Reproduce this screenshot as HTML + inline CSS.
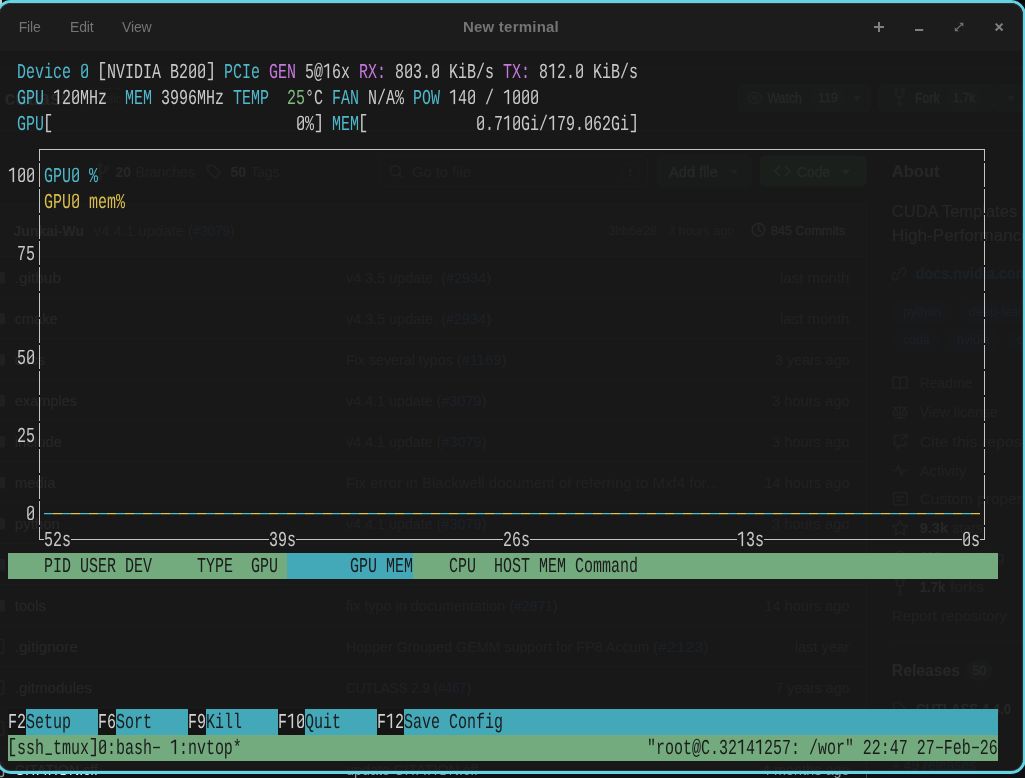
<!DOCTYPE html>
<html><head><meta charset="utf-8"><title>New terminal</title>
<style>
html,body{margin:0;padding:0}
body{width:1025px;height:778px;overflow:hidden;position:relative;background:#0d1117;font-family:"Liberation Sans",sans-serif}
#win{position:absolute;left:-4px;top:0;width:1030px;height:774px;box-sizing:border-box;border:3px solid #62d4e5;border-radius:15px;background:rgba(25,25,25,0.947);overflow:hidden}
#win:after{content:"";position:absolute;left:0;top:0;right:0;bottom:0;border-radius:12px;box-shadow:inset 0 0 0 1px rgba(120,95,90,0.3);pointer-events:none}
#inner{position:absolute;left:1px;top:-3px;width:1025px;height:778px;will-change:transform}
#tb{position:absolute;left:-1px;top:0;width:1027px;height:51px;background:#1c1c1c}
.m{position:absolute;top:17px;font-size:14px;line-height:20px;color:#747474;white-space:pre;letter-spacing:-0.15px}
#title{position:absolute;top:17px;left:411px;width:200px;text-align:center;font-size:15px;line-height:20px;font-weight:bold;color:#747474;white-space:pre;letter-spacing:0.22px}
.t{position:absolute;height:26px;line-height:26px;font-family:"Liberation Mono",monospace;font-size:21.2px;white-space:pre;transform-origin:0 0;transform:scaleX(0.70743);letter-spacing:0;text-rendering:geometricPrecision}
.r{position:absolute}
svg{position:absolute;overflow:visible}
.g{position:absolute}
</style></head>
<body>
<svg id="page" width="1025" height="778" viewBox="0 0 1025 778" font-family="Liberation Sans, sans-serif" style="position:absolute;left:0;top:0;will-change:transform">
<rect x="0" y="0" width="2" height="5" rx="0" fill="#c9c9c9"/>
<rect x="2" y="0" width="4" height="3" rx="0" fill="#050505"/>
<rect x="1019" y="0" width="6" height="3" rx="0" fill="#050608"/>
<path d="M0 67.5L1025 67.5" stroke="#3d444d" stroke-width="1" fill="none"/>
<path d="M0 130.5L1025 130.5" stroke="#3d444d" stroke-width="1" fill="none"/>
<text x="4.4" y="104.7" font-size="20" font-weight="bold" fill="#f0f6fc" textLength="67.3" lengthAdjust="spacingAndGlyphs">cutlass</text>
<rect x="82.5" y="88.5" width="46" height="20" rx="10" fill="none" stroke="#3d444d" stroke-width="1"/>
<text x="90" y="102.8" font-size="12" font-weight="normal" fill="#9198a1" textLength="31.5" lengthAdjust="spacingAndGlyphs">Public</text>
<rect x="738.5" y="84.5" width="132" height="27" rx="6" fill="#212830" stroke="#3d444d" stroke-width="1"/>
<path d="M748 97.8c2-4 4.5-5.6 7-5.6s5 1.6 7 5.6c-2 4-4.5 5.6-7 5.6s-5-1.6-7-5.6z M755 95.8a2 2 0 1 0 .01 0z" stroke="#9198a1" stroke-width="1.5" fill="none" stroke-linecap="round" stroke-linejoin="round"/>
<text x="767.4" y="102.8" font-size="14" font-weight="normal" fill="#f0f6fc" stroke="#f0f6fc" stroke-width="0.3" textLength="34.6" lengthAdjust="spacingAndGlyphs">Watch</text>
<rect x="810" y="88" width="35" height="20" rx="10" fill="#2f3742" stroke="none" stroke-width="1"/>
<text x="818" y="102.1" font-size="12" font-weight="normal" fill="#f0f6fc" stroke="#f0f6fc" stroke-width="0.3" textLength="20.0" lengthAdjust="spacingAndGlyphs">119</text>
<path d="M853.5 96.5h7l-3.5 4z" stroke="#9198a1" stroke-width="0.5" fill="#9198a1" stroke-linecap="round" stroke-linejoin="round"/>
<rect x="878.5" y="84.5" width="116" height="27" rx="6" fill="#212830" stroke="#3d444d" stroke-width="1"/>
<rect x="994.5" y="84.5" width="40" height="27" rx="6" fill="#212830" stroke="#3d444d" stroke-width="1"/>
<path d="M896 91.5v3.2c0 1.6 1 2.3 2.3 2.3h2.4c1.300 0 2.300-.7 2.300-2.300v-3.200M899.500 97v6" stroke="#9198a1" stroke-width="1.4" fill="none" stroke-linecap="round" stroke-linejoin="round"/>
<circle cx="896" cy="90.3" r="1.7" fill="none" stroke="#9198a1" stroke-width="1.3"/>
<circle cx="903" cy="90.3" r="1.7" fill="none" stroke="#9198a1" stroke-width="1.3"/>
<circle cx="899.5" cy="104.3" r="1.7" fill="none" stroke="#9198a1" stroke-width="1.3"/>
<text x="915" y="102.8" font-size="14" font-weight="normal" fill="#f0f6fc" stroke="#f0f6fc" stroke-width="0.3" textLength="24.5" lengthAdjust="spacingAndGlyphs">Fork</text>
<rect x="946" y="88" width="35" height="20" rx="10" fill="#2f3742" stroke="none" stroke-width="1"/>
<text x="953" y="102.1" font-size="12" font-weight="normal" fill="#f0f6fc" stroke="#f0f6fc" stroke-width="0.3" textLength="22.0" lengthAdjust="spacingAndGlyphs">1.7k</text>
<path d="M1007.5 96.5h7l-3.5 4z" stroke="#9198a1" stroke-width="0.5" fill="#9198a1" stroke-linecap="round" stroke-linejoin="round"/>
<path d="M100 166.5v8.500M100 175c0-3 6.500-2 6.500-5.500" stroke="#9198a1" stroke-width="1.4" fill="none" stroke-linecap="round" stroke-linejoin="round"/>
<circle cx="100" cy="165.3" r="1.6" fill="none" stroke="#9198a1" stroke-width="1.3"/>
<circle cx="100" cy="177.8" r="1.6" fill="none" stroke="#9198a1" stroke-width="1.3"/>
<circle cx="106.5" cy="168" r="1.6" fill="none" stroke="#9198a1" stroke-width="1.3"/>
<text x="115.5" y="177.0" font-size="14" font-weight="bold" fill="#f0f6fc" textLength="15.5" lengthAdjust="spacingAndGlyphs">20</text>
<text x="135.5" y="177.0" font-size="14" font-weight="normal" fill="#9198a1" textLength="59.5" lengthAdjust="spacingAndGlyphs">Branches</text>
<path d="M208 165.5h5.500l7 7-5.500 5.500-7-7z" stroke="#9198a1" stroke-width="1.4" fill="none" stroke-linecap="round" stroke-linejoin="round"/>
<text x="230.5" y="177.0" font-size="14" font-weight="bold" fill="#f0f6fc" textLength="15.5" lengthAdjust="spacingAndGlyphs">50</text>
<text x="250.5" y="177.0" font-size="14" font-weight="normal" fill="#9198a1" textLength="29.0" lengthAdjust="spacingAndGlyphs">Tags</text>
<rect x="379.5" y="156.5" width="268" height="30" rx="6" fill="#0d1117" stroke="#3d444d" stroke-width="1"/>
<circle cx="395.300" cy="170.800" r="5" fill="none" stroke="#9198a1" stroke-width="1.5"/>
<path d="M399 174.500l3.500 3.500" stroke="#9198a1" stroke-width="1.5" fill="none" stroke-linecap="round" stroke-linejoin="round"/>
<text x="412" y="176.5" font-size="14" font-weight="normal" fill="#9198a1" textLength="59.0" lengthAdjust="spacingAndGlyphs">Go to file</text>
<rect x="622.5" y="164.5" width="16" height="16" rx="4" fill="none" stroke="#3d444d" stroke-width="1"/>
<text x="628.5" y="175.9" font-size="11" font-weight="normal" fill="#9198a1" textLength="4.0" lengthAdjust="spacingAndGlyphs">t</text>
<rect x="657.5" y="155.5" width="94" height="31" rx="6" fill="#212830" stroke="#3d444d" stroke-width="1"/>
<text x="669" y="176.5" font-size="14" font-weight="normal" fill="#f0f6fc" stroke="#f0f6fc" stroke-width="0.3" textLength="49.0" lengthAdjust="spacingAndGlyphs">Add file</text>
<path d="M731 170h7l-3.500 4z" stroke="#9198a1" stroke-width="0.5" fill="#9198a1" stroke-linecap="round" stroke-linejoin="round"/>
<rect x="760" y="155.5" width="107" height="31" rx="6" fill="#238636" stroke="none" stroke-width="1"/>
<path d="M779.500 166.500l-4.500 4.500 4.500 4.500M785.500 166.500l4.500 4.500-4.500 4.500" stroke="#ffffff" stroke-width="1.6" fill="none" stroke-linecap="round" stroke-linejoin="round"/>
<text x="797" y="176.5" font-size="14" font-weight="normal" fill="#ffffff" stroke="#ffffff" stroke-width="0.3" textLength="33.0" lengthAdjust="spacingAndGlyphs">Code</text>
<path d="M842.500 170h7l-3.500 4z" stroke="#ffffff" stroke-width="0.5" fill="#ffffff" stroke-linecap="round" stroke-linejoin="round"/>
<rect x="-10.5" y="203.5" width="877" height="620" rx="6" fill="none" stroke="#3d444d" stroke-width="1"/>
<rect x="-10" y="204" width="876" height="52" rx="6" fill="#151b23" stroke="none" stroke-width="1"/>
<path d="M-10 256.5L866.5 256.5" stroke="#3d444d" stroke-width="1" fill="none"/>
<path d="M-10 297.5L866.5 297.5" stroke="#3d444d" stroke-width="1" fill="none"/>
<path d="M-10 338.5L866.5 338.5" stroke="#3d444d" stroke-width="1" fill="none"/>
<path d="M-10 379.5L866.5 379.5" stroke="#3d444d" stroke-width="1" fill="none"/>
<path d="M-10 420.5L866.5 420.5" stroke="#3d444d" stroke-width="1" fill="none"/>
<path d="M-10 461.5L866.5 461.5" stroke="#3d444d" stroke-width="1" fill="none"/>
<path d="M-10 502.5L866.5 502.5" stroke="#3d444d" stroke-width="1" fill="none"/>
<path d="M-10 543.5L866.5 543.5" stroke="#3d444d" stroke-width="1" fill="none"/>
<path d="M-10 584.5L866.5 584.5" stroke="#3d444d" stroke-width="1" fill="none"/>
<path d="M-10 625.5L866.5 625.5" stroke="#3d444d" stroke-width="1" fill="none"/>
<path d="M-10 666.5L866.5 666.5" stroke="#3d444d" stroke-width="1" fill="none"/>
<path d="M-10 707.5L866.5 707.5" stroke="#3d444d" stroke-width="1" fill="none"/>
<path d="M-10 748.5L866.5 748.5" stroke="#3d444d" stroke-width="1" fill="none"/>
<path d="M-10 789.5L866.5 789.5" stroke="#3d444d" stroke-width="1" fill="none"/>
<text x="13.6" y="235.5" font-size="14" font-weight="bold" fill="#f0f6fc" textLength="70.4" lengthAdjust="spacingAndGlyphs">Junkai-Wu</text>
<text x="93.7" y="235.5" font-size="14" font-weight="normal" fill="#9198a1" textLength="99.3" lengthAdjust="spacingAndGlyphs">v4.4.1 update (</text>
<text x="193" y="235.5" font-size="14" font-weight="normal" fill="#4493f8" textLength="37.0" lengthAdjust="spacingAndGlyphs">#3079</text>
<text x="230" y="235.5" font-size="14" font-weight="normal" fill="#9198a1" textLength="4.5" lengthAdjust="spacingAndGlyphs">)</text>
<text x="608.5" y="235.0" font-size="12.5" font-weight="normal" fill="#9198a1" textLength="125.5" lengthAdjust="spacingAndGlyphs">3bb6e28 · 3 hours ago</text>
<circle cx="758.500" cy="229.800" r="6.300" fill="none" stroke="#f0f6fc" stroke-width="1.4"/>
<path d="M758.500 226v4.200l2.800 1.600" stroke="#f0f6fc" stroke-width="1.4" fill="none" stroke-linecap="round" stroke-linejoin="round"/>
<text x="771" y="234.8" font-size="13.5" font-weight="normal" fill="#f0f6fc" stroke="#f0f6fc" stroke-width="0.3" textLength="74.0" lengthAdjust="spacingAndGlyphs">845 Commits</text>
<rect x="-8" y="272.0" width="13" height="11.5" rx="2" fill="#9198a1" stroke="none" stroke-width="1"/>
<text x="14.8" y="282.7" font-size="14.5" font-weight="normal" fill="#f0f6fc" textLength="46.2" lengthAdjust="spacingAndGlyphs">.github</text>
<text x="346" y="282.7" font-size="14.5" font-weight="normal" fill="#9198a1" textLength="100.0" lengthAdjust="spacingAndGlyphs">v4.3.5 update. (</text>
<text x="446" y="282.7" font-size="14.5" font-weight="normal" fill="#4493f8" textLength="40.0" lengthAdjust="spacingAndGlyphs">#2934</text>
<text x="486" y="282.7" font-size="14.5" font-weight="normal" fill="#9198a1" textLength="5.5" lengthAdjust="spacingAndGlyphs">)</text>
<text x="780" y="282.7" font-size="14.5" font-weight="normal" fill="#9198a1" textLength="69.5" lengthAdjust="spacingAndGlyphs">last month</text>
<rect x="-8" y="313.0" width="13" height="11.5" rx="2" fill="#9198a1" stroke="none" stroke-width="1"/>
<text x="14.8" y="323.7" font-size="14.5" font-weight="normal" fill="#f0f6fc" textLength="42.7" lengthAdjust="spacingAndGlyphs">cmake</text>
<text x="346" y="323.7" font-size="14.5" font-weight="normal" fill="#9198a1" textLength="100.0" lengthAdjust="spacingAndGlyphs">v4.3.5 update. (</text>
<text x="446" y="323.7" font-size="14.5" font-weight="normal" fill="#4493f8" textLength="40.0" lengthAdjust="spacingAndGlyphs">#2934</text>
<text x="486" y="323.7" font-size="14.5" font-weight="normal" fill="#9198a1" textLength="5.5" lengthAdjust="spacingAndGlyphs">)</text>
<text x="780" y="323.7" font-size="14.5" font-weight="normal" fill="#9198a1" textLength="69.5" lengthAdjust="spacingAndGlyphs">last month</text>
<rect x="-8" y="354.0" width="13" height="11.5" rx="2" fill="#9198a1" stroke="none" stroke-width="1"/>
<text x="14.8" y="364.7" font-size="14.5" font-weight="normal" fill="#f0f6fc" textLength="30.2" lengthAdjust="spacingAndGlyphs">docs</text>
<text x="346" y="364.7" font-size="14.5" font-weight="normal" fill="#9198a1" textLength="115.5" lengthAdjust="spacingAndGlyphs">Fix several typos (</text>
<text x="461.5" y="364.7" font-size="14.5" font-weight="normal" fill="#4493f8" textLength="40.0" lengthAdjust="spacingAndGlyphs">#1169</text>
<text x="501.5" y="364.7" font-size="14.5" font-weight="normal" fill="#9198a1" textLength="5.0" lengthAdjust="spacingAndGlyphs">)</text>
<text x="775" y="364.7" font-size="14.5" font-weight="normal" fill="#9198a1" textLength="74.5" lengthAdjust="spacingAndGlyphs">3 years ago</text>
<rect x="-8" y="395.0" width="13" height="11.5" rx="2" fill="#9198a1" stroke="none" stroke-width="1"/>
<text x="14.8" y="405.7" font-size="14.5" font-weight="normal" fill="#f0f6fc" textLength="62.2" lengthAdjust="spacingAndGlyphs">examples</text>
<text x="346" y="405.7" font-size="14.5" font-weight="normal" fill="#9198a1" textLength="95.5" lengthAdjust="spacingAndGlyphs">v4.4.1 update (</text>
<text x="441.5" y="405.7" font-size="14.5" font-weight="normal" fill="#4493f8" textLength="40.0" lengthAdjust="spacingAndGlyphs">#3079</text>
<text x="481.5" y="405.7" font-size="14.5" font-weight="normal" fill="#9198a1" textLength="5.0" lengthAdjust="spacingAndGlyphs">)</text>
<text x="772" y="405.7" font-size="14.5" font-weight="normal" fill="#9198a1" textLength="77.5" lengthAdjust="spacingAndGlyphs">3 hours ago</text>
<rect x="-8" y="436.0" width="13" height="11.5" rx="2" fill="#9198a1" stroke="none" stroke-width="1"/>
<text x="14.8" y="446.7" font-size="14.5" font-weight="normal" fill="#f0f6fc" textLength="47.2" lengthAdjust="spacingAndGlyphs">include</text>
<text x="346" y="446.7" font-size="14.5" font-weight="normal" fill="#9198a1" textLength="95.5" lengthAdjust="spacingAndGlyphs">v4.4.1 update (</text>
<text x="441.5" y="446.7" font-size="14.5" font-weight="normal" fill="#4493f8" textLength="40.0" lengthAdjust="spacingAndGlyphs">#3079</text>
<text x="481.5" y="446.7" font-size="14.5" font-weight="normal" fill="#9198a1" textLength="5.0" lengthAdjust="spacingAndGlyphs">)</text>
<text x="772" y="446.7" font-size="14.5" font-weight="normal" fill="#9198a1" textLength="77.5" lengthAdjust="spacingAndGlyphs">3 hours ago</text>
<rect x="-8" y="477.0" width="13" height="11.5" rx="2" fill="#9198a1" stroke="none" stroke-width="1"/>
<text x="14.8" y="487.7" font-size="14.5" font-weight="normal" fill="#f0f6fc" textLength="40.7" lengthAdjust="spacingAndGlyphs">media</text>
<text x="346" y="487.7" font-size="14.5" font-weight="normal" fill="#9198a1" textLength="372.5" lengthAdjust="spacingAndGlyphs">Fix error in Blackwell document of referring to Mxf4 for...</text>
<text x="764.5" y="487.7" font-size="14.5" font-weight="normal" fill="#9198a1" textLength="85.0" lengthAdjust="spacingAndGlyphs">14 hours ago</text>
<rect x="-8" y="518.0" width="13" height="11.5" rx="2" fill="#9198a1" stroke="none" stroke-width="1"/>
<text x="14.8" y="528.7" font-size="14.5" font-weight="normal" fill="#f0f6fc" textLength="45.2" lengthAdjust="spacingAndGlyphs">python</text>
<text x="346" y="528.7" font-size="14.5" font-weight="normal" fill="#9198a1" textLength="95.5" lengthAdjust="spacingAndGlyphs">v4.4.1 update (</text>
<text x="441.5" y="528.7" font-size="14.5" font-weight="normal" fill="#4493f8" textLength="40.0" lengthAdjust="spacingAndGlyphs">#3079</text>
<text x="481.5" y="528.7" font-size="14.5" font-weight="normal" fill="#9198a1" textLength="5.0" lengthAdjust="spacingAndGlyphs">)</text>
<text x="772" y="528.7" font-size="14.5" font-weight="normal" fill="#9198a1" textLength="77.5" lengthAdjust="spacingAndGlyphs">3 hours ago</text>
<rect x="-8" y="559.0" width="13" height="11.5" rx="2" fill="#9198a1" stroke="none" stroke-width="1"/>
<text x="14.8" y="569.7" font-size="14.5" font-weight="normal" fill="#f0f6fc" textLength="24.2" lengthAdjust="spacingAndGlyphs">test</text>
<text x="346" y="569.7" font-size="14.5" font-weight="normal" fill="#9198a1" textLength="95.5" lengthAdjust="spacingAndGlyphs">v4.4.1 update (</text>
<text x="441.5" y="569.7" font-size="14.5" font-weight="normal" fill="#4493f8" textLength="40.0" lengthAdjust="spacingAndGlyphs">#3079</text>
<text x="481.5" y="569.7" font-size="14.5" font-weight="normal" fill="#9198a1" textLength="5.0" lengthAdjust="spacingAndGlyphs">)</text>
<text x="772" y="569.7" font-size="14.5" font-weight="normal" fill="#9198a1" textLength="77.5" lengthAdjust="spacingAndGlyphs">3 hours ago</text>
<rect x="-8" y="600.0" width="13" height="11.5" rx="2" fill="#9198a1" stroke="none" stroke-width="1"/>
<text x="14.8" y="610.7" font-size="14.5" font-weight="normal" fill="#f0f6fc" textLength="31.2" lengthAdjust="spacingAndGlyphs">tools</text>
<text x="346" y="610.7" font-size="14.5" font-weight="normal" fill="#9198a1" textLength="168.0" lengthAdjust="spacingAndGlyphs">fix typo in documentation (</text>
<text x="514" y="610.7" font-size="14.5" font-weight="normal" fill="#4493f8" textLength="39.0" lengthAdjust="spacingAndGlyphs">#2871</text>
<text x="553" y="610.7" font-size="14.5" font-weight="normal" fill="#9198a1" textLength="5.0" lengthAdjust="spacingAndGlyphs">)</text>
<text x="764.5" y="610.7" font-size="14.5" font-weight="normal" fill="#9198a1" textLength="85.0" lengthAdjust="spacingAndGlyphs">14 hours ago</text>
<rect x="-7.5" y="639.5" width="11" height="14" rx="2" fill="none" stroke="#9198a1" stroke-width="1.4"/>
<text x="14.8" y="651.7" font-size="14.5" font-weight="normal" fill="#f0f6fc" textLength="63.2" lengthAdjust="spacingAndGlyphs">.gitignore</text>
<text x="346" y="651.7" font-size="14.5" font-weight="normal" fill="#9198a1" textLength="312.0" lengthAdjust="spacingAndGlyphs">Hopper Grouped GEMM support for FP8 Accum (</text>
<text x="658" y="651.7" font-size="14.5" font-weight="normal" fill="#4493f8" textLength="45.5" lengthAdjust="spacingAndGlyphs">#2123</text>
<text x="703.5" y="651.7" font-size="14.5" font-weight="normal" fill="#9198a1" textLength="5.0" lengthAdjust="spacingAndGlyphs">)</text>
<text x="795" y="651.7" font-size="14.5" font-weight="normal" fill="#9198a1" textLength="54.5" lengthAdjust="spacingAndGlyphs">last year</text>
<rect x="-7.5" y="680.5" width="11" height="14" rx="2" fill="none" stroke="#9198a1" stroke-width="1.4"/>
<text x="14.8" y="692.7" font-size="14.5" font-weight="normal" fill="#f0f6fc" textLength="77.2" lengthAdjust="spacingAndGlyphs">.gitmodules</text>
<text x="346" y="692.7" font-size="14.5" font-weight="normal" fill="#9198a1" textLength="92.0" lengthAdjust="spacingAndGlyphs">CUTLASS 2.9 (</text>
<text x="438" y="692.7" font-size="14.5" font-weight="normal" fill="#4493f8" textLength="28.5" lengthAdjust="spacingAndGlyphs">#467</text>
<text x="466.5" y="692.7" font-size="14.5" font-weight="normal" fill="#9198a1" textLength="5.0" lengthAdjust="spacingAndGlyphs">)</text>
<text x="775.5" y="692.7" font-size="14.5" font-weight="normal" fill="#9198a1" textLength="74.0" lengthAdjust="spacingAndGlyphs">7 years ago</text>
<rect x="-7.5" y="721.5" width="11" height="14" rx="2" fill="none" stroke="#9198a1" stroke-width="1.4"/>
<text x="14.8" y="733.7" font-size="14.5" font-weight="normal" fill="#f0f6fc" textLength="84.2" lengthAdjust="spacingAndGlyphs">.gitattributes</text>
<text x="346" y="733.7" font-size="14.5" font-weight="normal" fill="#9198a1" textLength="98.0" lengthAdjust="spacingAndGlyphs">v4.2.0 release (</text>
<text x="444" y="733.7" font-size="14.5" font-weight="normal" fill="#4493f8" textLength="40.0" lengthAdjust="spacingAndGlyphs">#2617</text>
<text x="484" y="733.7" font-size="14.5" font-weight="normal" fill="#9198a1" textLength="5.0" lengthAdjust="spacingAndGlyphs">)</text>
<text x="762" y="733.7" font-size="14.5" font-weight="normal" fill="#9198a1" textLength="87.5" lengthAdjust="spacingAndGlyphs">6 months ago</text>
<rect x="-7.5" y="762.5" width="11" height="14" rx="2" fill="none" stroke="#9198a1" stroke-width="1.4"/>
<text x="14.8" y="774.7" font-size="14.5" font-weight="normal" fill="#f0f6fc" textLength="83.2" lengthAdjust="spacingAndGlyphs">CITATION.cff</text>
<text x="346" y="774.7" font-size="14.5" font-weight="normal" fill="#9198a1" textLength="132.0" lengthAdjust="spacingAndGlyphs">update CITATION.cff</text>
<text x="762" y="774.7" font-size="14.5" font-weight="normal" fill="#9198a1" textLength="87.5" lengthAdjust="spacingAndGlyphs">4 months ago</text>
<text x="891.8" y="176.9" font-size="16" font-weight="bold" fill="#f0f6fc" textLength="47.7" lengthAdjust="spacingAndGlyphs">About</text>
<text x="891.8" y="217.4" font-size="16.5" font-weight="normal" fill="#f0f6fc" textLength="282.2" lengthAdjust="spacingAndGlyphs">CUDA Templates and Python DSLs for</text>
<text x="891.8" y="240.9" font-size="16.5" font-weight="normal" fill="#f0f6fc" textLength="254.2" lengthAdjust="spacingAndGlyphs">High-Performance Linear Algebra</text>
<path d="M899.500 270.500l1.500-1.500a3 3 0 0 1 4.300 4.300l-2.500 2.500M898.500 277.500l-1.500 1.500a3 3 0 0 1-4.300-4.300l2.500-2.500M896.500 276l4-4" stroke="#9198a1" stroke-width="1.5" fill="none" stroke-linecap="round" stroke-linejoin="round"/>
<text x="915.7" y="279.2" font-size="16" font-weight="bold" fill="#4493f8" textLength="242.3" lengthAdjust="spacingAndGlyphs">docs.nvidia.com/cutlass/index.html</text>
<rect x="893" y="300.6" width="58.5" height="22" rx="11" fill="#0f1726" stroke="none" stroke-width="1"/>
<text x="903" y="315.9" font-size="12" font-weight="normal" fill="#4493f8" textLength="38.5" lengthAdjust="spacingAndGlyphs">python</text>
<rect x="959" y="300.6" width="97" height="22" rx="11" fill="#0f1726" stroke="none" stroke-width="1"/>
<text x="969" y="315.9" font-size="12" font-weight="normal" fill="#4493f8" textLength="77.0" lengthAdjust="spacingAndGlyphs">deep-learning</text>
<rect x="893" y="329" width="46.5" height="22" rx="11" fill="#0f1726" stroke="none" stroke-width="1"/>
<text x="903" y="344.3" font-size="12" font-weight="normal" fill="#4493f8" textLength="26.5" lengthAdjust="spacingAndGlyphs">cuda</text>
<rect x="947" y="329" width="52.5" height="22" rx="11" fill="#0f1726" stroke="none" stroke-width="1"/>
<text x="957" y="344.3" font-size="12" font-weight="normal" fill="#4493f8" textLength="32.5" lengthAdjust="spacingAndGlyphs">nvidia</text>
<rect x="1007" y="329" width="40" height="22" rx="11" fill="#0f1726" stroke="none" stroke-width="1"/>
<text x="1017" y="344.3" font-size="12" font-weight="normal" fill="#4493f8" textLength="20.0" lengthAdjust="spacingAndGlyphs">cpp</text>
<text x="919.7" y="388.2" font-size="14.5" font-weight="normal" fill="#9198a1" textLength="52.9" lengthAdjust="spacingAndGlyphs">Readme</text>
<text x="919.7" y="417.0" font-size="14.5" font-weight="normal" fill="#9198a1" textLength="77.9" lengthAdjust="spacingAndGlyphs">View license</text>
<text x="919.7" y="446.5" font-size="14.5" font-weight="normal" fill="#9198a1" textLength="132.3" lengthAdjust="spacingAndGlyphs">Cite this repository</text>
<text x="919.7" y="475.6" font-size="14.5" font-weight="normal" fill="#9198a1" textLength="46.8" lengthAdjust="spacingAndGlyphs">Activity</text>
<text x="919.7" y="504.4" font-size="14.5" font-weight="normal" fill="#9198a1" textLength="126.3" lengthAdjust="spacingAndGlyphs">Custom properties</text>
<path d="M893 377.500c2.500-.8 5-.8 7 1v10.500c-2-1.700-4.500-1.700-7-1zM907 377.500c-2.500-.8-5-.8-7 1v10.500c2-1.700 4.500-1.700 7-1z" stroke="#9198a1" stroke-width="1.4" fill="none" stroke-linecap="round" stroke-linejoin="round"/>
<path d="M900 405.500v12M895 418h10M893.500 407.500h13M893 413.500l2.500-5.500 2.500 5.500a2.600 2.600 0 0 1-5 0zM902 413.500l2.500-5.500 2.500 5.500a2.600 2.600 0 0 1-5 0z" stroke="#9198a1" stroke-width="1.3" fill="none" stroke-linecap="round" stroke-linejoin="round"/>
<path d="M901 435.500h-6.500v10h3v3l3-3h5v-4M903 434.500h4v4M907 434.500l-5.500 5.500" stroke="#9198a1" stroke-width="1.4" fill="none" stroke-linecap="round" stroke-linejoin="round"/>
<path d="M893 470.500h3.500l2-5 3 10 2-5h3.500" stroke="#9198a1" stroke-width="1.5" fill="none" stroke-linecap="round" stroke-linejoin="round"/>
<rect x="893.5" y="492.5" width="13.5" height="12.5" rx="2" fill="none" stroke="#9198a1" stroke-width="1.4"/>
<path d="M896.500 497h7.500M896.500 500.500h5" stroke="#9198a1" stroke-width="1.3" fill="none" stroke-linecap="round" stroke-linejoin="round"/>
<path d="M900 520.500l2.300 4.800 5.200.7-3.800 3.600.9 5.200-4.600-2.500-4.600 2.500.9-5.200-3.800-3.600 5.200-.7z" stroke="#9198a1" stroke-width="1.4" fill="none" stroke-linecap="round" stroke-linejoin="round"/>
<text x="919.7" y="533.2" font-size="14.5" font-weight="bold" fill="#f0f6fc" textLength="28.3" lengthAdjust="spacingAndGlyphs">9.3k</text>
<text x="952.5" y="533.2" font-size="14.5" font-weight="normal" fill="#9198a1" textLength="30.1" lengthAdjust="spacingAndGlyphs">stars</text>
<path d="M893 557c2-4 4.500-5.600 7-5.600s5 1.600 7 5.600c-2 4-4.500 5.600-7 5.600s-5-1.600-7-5.600z M900 555a2 2 0 1 0 .01 0z" stroke="#9198a1" stroke-width="1.4" fill="none" stroke-linecap="round" stroke-linejoin="round"/>
<text x="919.7" y="562.2" font-size="14.5" font-weight="bold" fill="#f0f6fc" textLength="21.3" lengthAdjust="spacingAndGlyphs">119</text>
<text x="945.5" y="562.2" font-size="14.5" font-weight="normal" fill="#9198a1" textLength="59.0" lengthAdjust="spacingAndGlyphs">watching</text>
<path d="M896.500 580.500v3.200c0 1.600 1 2.300 2.300 2.300h2.400c1.300 0 2.300-.7 2.300-2.300v-3.200M900 586v6" stroke="#9198a1" stroke-width="1.4" fill="none" stroke-linecap="round" stroke-linejoin="round"/>
<circle cx="896.5" cy="579.3" r="1.700" fill="none" stroke="#9198a1" stroke-width="1.300"/>
<circle cx="903.5" cy="579.3" r="1.700" fill="none" stroke="#9198a1" stroke-width="1.300"/>
<circle cx="900" cy="593.3" r="1.700" fill="none" stroke="#9198a1" stroke-width="1.300"/>
<text x="919.7" y="591.5" font-size="14.5" font-weight="bold" fill="#f0f6fc" textLength="25.8" lengthAdjust="spacingAndGlyphs">1.7k</text>
<text x="950" y="591.5" font-size="14.5" font-weight="normal" fill="#9198a1" textLength="34.0" lengthAdjust="spacingAndGlyphs">forks</text>
<text x="891.8" y="620.7" font-size="14.5" font-weight="normal" fill="#9198a1" textLength="115.2" lengthAdjust="spacingAndGlyphs">Report repository</text>
<path d="M891.8 641.5L1025 641.5" stroke="#3d444d" stroke-width="1" fill="none"/>
<text x="891.8" y="676.2" font-size="16" font-weight="bold" fill="#f0f6fc" textLength="68.2" lengthAdjust="spacingAndGlyphs">Releases</text>
<rect x="966" y="660.5" width="26" height="20" rx="10" fill="#2f3742" stroke="none" stroke-width="1"/>
<text x="972.5" y="674.8" font-size="12" font-weight="normal" fill="#f0f6fc" stroke="#f0f6fc" stroke-width="0.3" textLength="13.5" lengthAdjust="spacingAndGlyphs">50</text>
<path d="M893.500 702.500h5.500l7 7-5.500 5.500-7-7z" stroke="#3fb950" stroke-width="1.4" fill="none" stroke-linecap="round" stroke-linejoin="round"/>
<text x="916" y="713.7" font-size="14.5" font-weight="bold" fill="#f0f6fc" textLength="95.0" lengthAdjust="spacingAndGlyphs">CUTLASS 4.4.0</text>
<text x="916" y="734.3" font-size="12" font-weight="normal" fill="#3fb950" textLength="32.0" lengthAdjust="spacingAndGlyphs">Latest</text>
<text x="891.8" y="770.2" font-size="14.5" font-weight="normal" fill="#4493f8" textLength="84.2" lengthAdjust="spacingAndGlyphs">+ 49 releases</text>
</svg>
<div id="win"><div id="inner">
<div id="tb"></div>
<div class="m" style="left:18.7px">File</div>
<div class="m" style="left:70px">Edit</div>
<div class="m" style="left:122px">View</div>
<div id="title">New terminal</div>
<svg style="left:0;top:0" width="1025" height="51">
<g fill="#808080">
<rect x="874" y="26" width="10" height="2"/><rect x="878" y="22" width="2" height="10"/>
<rect x="915" y="29" width="8.2" height="2"/>
</g>
<path d="M995.7 23.65L1002.5 30.45M1002.5 23.65L995.7 30.45" stroke="#808080" stroke-width="2" fill="none"/>
<g fill="#727272" stroke="none">
<path d="M963.3 22.8V26.8L959.3 22.8Z"/><path d="M954.8 31.2V27.2L958.8 31.2Z"/>
</g>
<path d="M956.6 29.4L961.5 24.6" stroke="#727272" stroke-width="1.3" fill="none"/>
</svg>
<svg class="g" style="left:80px;top:59px" width="9" height="26" viewBox="0 0 9 26"><rect x="1.9" y="5.4" width="5.4" height="13" rx="2.7" fill="none" stroke="#4fb8cb" stroke-width="1.4"/><path d="M6.9 9.3L2.3 14.6" stroke="#4fb8cb" stroke-width="1.1" fill="none"/></svg>
<div class="t " style="left:17px;top:60px;color:#4fb8cb">Device  </div>
<svg class="g" style="left:98px;top:59px" width="9" height="26" viewBox="0 0 9 26"><path d="M7.2 3.7H2.85V20.55H7.2" stroke="#c9c9c9" stroke-width="1.45" fill="none"/></svg>
<svg class="g" style="left:188px;top:59px" width="9" height="26" viewBox="0 0 9 26"><rect x="1.9" y="5.4" width="5.4" height="13" rx="2.7" fill="none" stroke="#c9c9c9" stroke-width="1.4"/><path d="M6.9 9.3L2.3 14.6" stroke="#c9c9c9" stroke-width="1.1" fill="none"/></svg>
<svg class="g" style="left:197px;top:59px" width="9" height="26" viewBox="0 0 9 26"><rect x="1.9" y="5.4" width="5.4" height="13" rx="2.7" fill="none" stroke="#c9c9c9" stroke-width="1.4"/><path d="M6.9 9.3L2.3 14.6" stroke="#c9c9c9" stroke-width="1.1" fill="none"/></svg>
<svg class="g" style="left:206px;top:59px" width="9" height="26" viewBox="0 0 9 26"><path d="M1.8 3.7H6.15V20.55H1.8" stroke="#c9c9c9" stroke-width="1.45" fill="none"/></svg>
<div class="t " style="left:98px;top:60px;color:#c9c9c9"> NVIDIA B2   </div>
<div class="t " style="left:224px;top:60px;color:#4fb8cb">PCIe</div>
<div class="t " style="left:269px;top:60px;color:#c678dd">GEN</div>
<svg class="g" style="left:323px;top:59px" width="9" height="26" viewBox="0 0 9 26"><path d="M5.35 4.7V19.1" stroke="#c9c9c9" stroke-width="1.55" fill="none"/><path d="M1.15 7.9L5.1 5.35" stroke="#c9c9c9" stroke-width="1.7" fill="none"/></svg>
<div class="t " style="left:305px;top:60px;color:#c9c9c9">5@ 6x</div>
<div class="t " style="left:359px;top:60px;color:#c678dd">RX:</div>
<svg class="g" style="left:404px;top:59px" width="9" height="26" viewBox="0 0 9 26"><rect x="1.9" y="5.4" width="5.4" height="13" rx="2.7" fill="none" stroke="#c9c9c9" stroke-width="1.4"/><path d="M6.9 9.3L2.3 14.6" stroke="#c9c9c9" stroke-width="1.1" fill="none"/></svg>
<svg class="g" style="left:431px;top:59px" width="9" height="26" viewBox="0 0 9 26"><rect x="1.9" y="5.4" width="5.4" height="13" rx="2.7" fill="none" stroke="#c9c9c9" stroke-width="1.4"/><path d="M6.9 9.3L2.3 14.6" stroke="#c9c9c9" stroke-width="1.1" fill="none"/></svg>
<div class="t " style="left:395px;top:60px;color:#c9c9c9">8 3.  KiB/s</div>
<div class="t " style="left:503px;top:60px;color:#c678dd">TX:</div>
<svg class="g" style="left:548px;top:59px" width="9" height="26" viewBox="0 0 9 26"><path d="M5.35 4.7V19.1" stroke="#c9c9c9" stroke-width="1.55" fill="none"/><path d="M1.15 7.9L5.1 5.35" stroke="#c9c9c9" stroke-width="1.7" fill="none"/></svg>
<svg class="g" style="left:575px;top:59px" width="9" height="26" viewBox="0 0 9 26"><rect x="1.9" y="5.4" width="5.4" height="13" rx="2.7" fill="none" stroke="#c9c9c9" stroke-width="1.4"/><path d="M6.9 9.3L2.3 14.6" stroke="#c9c9c9" stroke-width="1.1" fill="none"/></svg>
<div class="t " style="left:539px;top:60px;color:#c9c9c9">8 2.  KiB/s</div>
<div class="t " style="left:17px;top:86px;color:#4fb8cb">GPU</div>
<svg class="g" style="left:53px;top:85px" width="9" height="26" viewBox="0 0 9 26"><path d="M5.35 4.7V19.1" stroke="#c9c9c9" stroke-width="1.55" fill="none"/><path d="M1.15 7.9L5.1 5.35" stroke="#c9c9c9" stroke-width="1.7" fill="none"/></svg>
<svg class="g" style="left:71px;top:85px" width="9" height="26" viewBox="0 0 9 26"><rect x="1.9" y="5.4" width="5.4" height="13" rx="2.7" fill="none" stroke="#c9c9c9" stroke-width="1.4"/><path d="M6.9 9.3L2.3 14.6" stroke="#c9c9c9" stroke-width="1.1" fill="none"/></svg>
<div class="t " style="left:53px;top:86px;color:#c9c9c9"> 2 MHz</div>
<div class="t " style="left:125px;top:86px;color:#4fb8cb">MEM</div>
<div class="t " style="left:161px;top:86px;color:#c9c9c9">3996MHz</div>
<div class="t " style="left:233px;top:86px;color:#4fb8cb">TEMP</div>
<div class="t " style="left:287px;top:86px;color:#82bb7c">25</div>
<div class="t " style="left:305px;top:86px;color:#c9c9c9">°C</div>
<div class="t " style="left:332px;top:86px;color:#4fb8cb">FAN</div>
<div class="t " style="left:368px;top:86px;color:#c9c9c9">N/A%</div>
<div class="t " style="left:413px;top:86px;color:#4fb8cb">POW</div>
<svg class="g" style="left:449px;top:85px" width="9" height="26" viewBox="0 0 9 26"><path d="M5.35 4.7V19.1" stroke="#c9c9c9" stroke-width="1.55" fill="none"/><path d="M1.15 7.9L5.1 5.35" stroke="#c9c9c9" stroke-width="1.7" fill="none"/></svg>
<svg class="g" style="left:467px;top:85px" width="9" height="26" viewBox="0 0 9 26"><rect x="1.9" y="5.4" width="5.4" height="13" rx="2.7" fill="none" stroke="#c9c9c9" stroke-width="1.4"/><path d="M6.9 9.3L2.3 14.6" stroke="#c9c9c9" stroke-width="1.1" fill="none"/></svg>
<svg class="g" style="left:503px;top:85px" width="9" height="26" viewBox="0 0 9 26"><path d="M5.35 4.7V19.1" stroke="#c9c9c9" stroke-width="1.55" fill="none"/><path d="M1.15 7.9L5.1 5.35" stroke="#c9c9c9" stroke-width="1.7" fill="none"/></svg>
<svg class="g" style="left:512px;top:85px" width="9" height="26" viewBox="0 0 9 26"><rect x="1.9" y="5.4" width="5.4" height="13" rx="2.7" fill="none" stroke="#c9c9c9" stroke-width="1.4"/><path d="M6.9 9.3L2.3 14.6" stroke="#c9c9c9" stroke-width="1.1" fill="none"/></svg>
<svg class="g" style="left:521px;top:85px" width="9" height="26" viewBox="0 0 9 26"><rect x="1.9" y="5.4" width="5.4" height="13" rx="2.7" fill="none" stroke="#c9c9c9" stroke-width="1.4"/><path d="M6.9 9.3L2.3 14.6" stroke="#c9c9c9" stroke-width="1.1" fill="none"/></svg>
<svg class="g" style="left:530px;top:85px" width="9" height="26" viewBox="0 0 9 26"><rect x="1.9" y="5.4" width="5.4" height="13" rx="2.7" fill="none" stroke="#c9c9c9" stroke-width="1.4"/><path d="M6.9 9.3L2.3 14.6" stroke="#c9c9c9" stroke-width="1.1" fill="none"/></svg>
<div class="t " style="left:449px;top:86px;color:#c9c9c9"> 4  /     </div>
<div class="t " style="left:17px;top:112px;color:#4fb8cb">GPU</div>
<svg class="g" style="left:44px;top:111px" width="9" height="26" viewBox="0 0 9 26"><path d="M7.2 3.7H2.85V20.55H7.2" stroke="#c9c9c9" stroke-width="1.45" fill="none"/></svg>
<svg class="g" style="left:296px;top:111px" width="9" height="26" viewBox="0 0 9 26"><rect x="1.9" y="5.4" width="5.4" height="13" rx="2.7" fill="none" stroke="#c9c9c9" stroke-width="1.4"/><path d="M6.9 9.3L2.3 14.6" stroke="#c9c9c9" stroke-width="1.1" fill="none"/></svg>
<svg class="g" style="left:314px;top:111px" width="9" height="26" viewBox="0 0 9 26"><path d="M1.8 3.7H6.15V20.55H1.8" stroke="#c9c9c9" stroke-width="1.45" fill="none"/></svg>
<div class="t " style="left:296px;top:112px;color:#c9c9c9"> % </div>
<div class="t " style="left:332px;top:112px;color:#4fb8cb">MEM</div>
<svg class="g" style="left:359px;top:111px" width="9" height="26" viewBox="0 0 9 26"><path d="M7.2 3.7H2.85V20.55H7.2" stroke="#c9c9c9" stroke-width="1.45" fill="none"/></svg>
<svg class="g" style="left:476px;top:111px" width="9" height="26" viewBox="0 0 9 26"><rect x="1.9" y="5.4" width="5.4" height="13" rx="2.7" fill="none" stroke="#c9c9c9" stroke-width="1.4"/><path d="M6.9 9.3L2.3 14.6" stroke="#c9c9c9" stroke-width="1.1" fill="none"/></svg>
<svg class="g" style="left:503px;top:111px" width="9" height="26" viewBox="0 0 9 26"><path d="M5.35 4.7V19.1" stroke="#c9c9c9" stroke-width="1.55" fill="none"/><path d="M1.15 7.9L5.1 5.35" stroke="#c9c9c9" stroke-width="1.7" fill="none"/></svg>
<svg class="g" style="left:512px;top:111px" width="9" height="26" viewBox="0 0 9 26"><rect x="1.9" y="5.4" width="5.4" height="13" rx="2.7" fill="none" stroke="#c9c9c9" stroke-width="1.4"/><path d="M6.9 9.3L2.3 14.6" stroke="#c9c9c9" stroke-width="1.1" fill="none"/></svg>
<svg class="g" style="left:548px;top:111px" width="9" height="26" viewBox="0 0 9 26"><path d="M5.35 4.7V19.1" stroke="#c9c9c9" stroke-width="1.55" fill="none"/><path d="M1.15 7.9L5.1 5.35" stroke="#c9c9c9" stroke-width="1.7" fill="none"/></svg>
<svg class="g" style="left:584px;top:111px" width="9" height="26" viewBox="0 0 9 26"><rect x="1.9" y="5.4" width="5.4" height="13" rx="2.7" fill="none" stroke="#c9c9c9" stroke-width="1.4"/><path d="M6.9 9.3L2.3 14.6" stroke="#c9c9c9" stroke-width="1.1" fill="none"/></svg>
<svg class="g" style="left:629px;top:111px" width="9" height="26" viewBox="0 0 9 26"><path d="M1.8 3.7H6.15V20.55H1.8" stroke="#c9c9c9" stroke-width="1.45" fill="none"/></svg>
<div class="t " style="left:476px;top:112px;color:#c9c9c9"> .7  Gi/ 79. 62Gi </div>
<div class="r" style="left:39px;top:149px;width:946px;height:1px;background:#c6c6c6;"></div>
<div class="r" style="left:39px;top:149px;width:1px;height:12px;background:#c6c6c6;"></div>
<div class="r" style="left:39px;top:163px;width:1px;height:24px;background:#c6c6c6;"></div>
<div class="r" style="left:39px;top:189px;width:1px;height:24px;background:#c6c6c6;"></div>
<div class="r" style="left:39px;top:215px;width:1px;height:24px;background:#c6c6c6;"></div>
<div class="r" style="left:39px;top:241px;width:1px;height:24px;background:#c6c6c6;"></div>
<div class="r" style="left:39px;top:267px;width:1px;height:24px;background:#c6c6c6;"></div>
<div class="r" style="left:39px;top:293px;width:1px;height:24px;background:#c6c6c6;"></div>
<div class="r" style="left:39px;top:319px;width:1px;height:24px;background:#c6c6c6;"></div>
<div class="r" style="left:39px;top:345px;width:1px;height:24px;background:#c6c6c6;"></div>
<div class="r" style="left:39px;top:371px;width:1px;height:24px;background:#c6c6c6;"></div>
<div class="r" style="left:39px;top:397px;width:1px;height:24px;background:#c6c6c6;"></div>
<div class="r" style="left:39px;top:423px;width:1px;height:24px;background:#c6c6c6;"></div>
<div class="r" style="left:39px;top:449px;width:1px;height:24px;background:#c6c6c6;"></div>
<div class="r" style="left:39px;top:475px;width:1px;height:24px;background:#c6c6c6;"></div>
<div class="r" style="left:39px;top:501px;width:1px;height:24px;background:#c6c6c6;"></div>
<div class="r" style="left:39px;top:527px;width:1px;height:13px;background:#c6c6c6;"></div>
<div class="r" style="left:984px;top:149px;width:1px;height:12px;background:#c6c6c6;"></div>
<div class="r" style="left:984px;top:163px;width:1px;height:24px;background:#c6c6c6;"></div>
<div class="r" style="left:984px;top:189px;width:1px;height:24px;background:#c6c6c6;"></div>
<div class="r" style="left:984px;top:215px;width:1px;height:24px;background:#c6c6c6;"></div>
<div class="r" style="left:984px;top:241px;width:1px;height:24px;background:#c6c6c6;"></div>
<div class="r" style="left:984px;top:267px;width:1px;height:24px;background:#c6c6c6;"></div>
<div class="r" style="left:984px;top:293px;width:1px;height:24px;background:#c6c6c6;"></div>
<div class="r" style="left:984px;top:319px;width:1px;height:24px;background:#c6c6c6;"></div>
<div class="r" style="left:984px;top:345px;width:1px;height:24px;background:#c6c6c6;"></div>
<div class="r" style="left:984px;top:371px;width:1px;height:24px;background:#c6c6c6;"></div>
<div class="r" style="left:984px;top:397px;width:1px;height:24px;background:#c6c6c6;"></div>
<div class="r" style="left:984px;top:423px;width:1px;height:24px;background:#c6c6c6;"></div>
<div class="r" style="left:984px;top:449px;width:1px;height:24px;background:#c6c6c6;"></div>
<div class="r" style="left:984px;top:475px;width:1px;height:24px;background:#c6c6c6;"></div>
<div class="r" style="left:984px;top:501px;width:1px;height:24px;background:#c6c6c6;"></div>
<div class="r" style="left:984px;top:527px;width:1px;height:13px;background:#c6c6c6;"></div>
<svg class="g" style="left:8px;top:163px" width="9" height="26" viewBox="0 0 9 26"><path d="M5.35 4.7V19.1" stroke="#c9c9c9" stroke-width="1.55" fill="none"/><path d="M1.15 7.9L5.1 5.35" stroke="#c9c9c9" stroke-width="1.7" fill="none"/></svg>
<svg class="g" style="left:17px;top:163px" width="9" height="26" viewBox="0 0 9 26"><rect x="1.9" y="5.4" width="5.4" height="13" rx="2.7" fill="none" stroke="#c9c9c9" stroke-width="1.4"/><path d="M6.9 9.3L2.3 14.6" stroke="#c9c9c9" stroke-width="1.1" fill="none"/></svg>
<svg class="g" style="left:26px;top:163px" width="9" height="26" viewBox="0 0 9 26"><rect x="1.9" y="5.4" width="5.4" height="13" rx="2.7" fill="none" stroke="#c9c9c9" stroke-width="1.4"/><path d="M6.9 9.3L2.3 14.6" stroke="#c9c9c9" stroke-width="1.1" fill="none"/></svg>
<div class="t " style="left:17px;top:242px;color:#c9c9c9">75</div>
<svg class="g" style="left:26px;top:345px" width="9" height="26" viewBox="0 0 9 26"><rect x="1.9" y="5.4" width="5.4" height="13" rx="2.7" fill="none" stroke="#c9c9c9" stroke-width="1.4"/><path d="M6.9 9.3L2.3 14.6" stroke="#c9c9c9" stroke-width="1.1" fill="none"/></svg>
<div class="t " style="left:17px;top:346px;color:#c9c9c9">5 </div>
<div class="t " style="left:17px;top:424px;color:#c9c9c9">25</div>
<svg class="g" style="left:26px;top:501px" width="9" height="26" viewBox="0 0 9 26"><rect x="1.9" y="5.4" width="5.4" height="13" rx="2.7" fill="none" stroke="#c9c9c9" stroke-width="1.4"/><path d="M6.9 9.3L2.3 14.6" stroke="#c9c9c9" stroke-width="1.1" fill="none"/></svg>
<svg class="g" style="left:71px;top:163px" width="9" height="26" viewBox="0 0 9 26"><rect x="1.9" y="5.4" width="5.4" height="13" rx="2.7" fill="none" stroke="#4fb8cb" stroke-width="1.4"/><path d="M6.9 9.3L2.3 14.6" stroke="#4fb8cb" stroke-width="1.1" fill="none"/></svg>
<div class="t " style="left:44px;top:164px;color:#4fb8cb">GPU  %</div>
<svg class="g" style="left:71px;top:189px" width="9" height="26" viewBox="0 0 9 26"><rect x="1.9" y="5.4" width="5.4" height="13" rx="2.7" fill="none" stroke="#d9bd4a" stroke-width="1.4"/><path d="M6.9 9.3L2.3 14.6" stroke="#d9bd4a" stroke-width="1.1" fill="none"/></svg>
<div class="t " style="left:44px;top:190px;color:#d9bd4a">GPU  mem%</div>
<div class="r" style="left:44px;top:513px;width:936px;height:1px;background:repeating-linear-gradient(90deg,#4bbed2 0,#4bbed2 9px,#e1c346 9px,#e1c346 18px)"></div>
<div class="r" style="left:44px;top:514px;width:936px;height:1px;opacity:.25;background:repeating-linear-gradient(90deg,#4bbed2 0,#4bbed2 9px,#e1c346 9px,#e1c346 18px)"></div>
<div class="r" style="left:39px;top:539px;width:5px;height:1px;background:#c6c6c6;"></div>
<div class="r" style="left:71px;top:539px;width:198px;height:1px;background:#c6c6c6;"></div>
<div class="r" style="left:296px;top:539px;width:207px;height:1px;background:#c6c6c6;"></div>
<div class="r" style="left:530px;top:539px;width:207px;height:1px;background:#c6c6c6;"></div>
<div class="r" style="left:764px;top:539px;width:198px;height:1px;background:#c6c6c6;"></div>
<div class="r" style="left:980px;top:539px;width:5px;height:1px;background:#c6c6c6;"></div>
<div class="t " style="left:44px;top:528px;color:#c9c9c9">52s</div>
<div class="t " style="left:269px;top:528px;color:#c9c9c9">39s</div>
<div class="t " style="left:503px;top:528px;color:#c9c9c9">26s</div>
<svg class="g" style="left:737px;top:527px" width="9" height="26" viewBox="0 0 9 26"><path d="M5.35 4.7V19.1" stroke="#c9c9c9" stroke-width="1.55" fill="none"/><path d="M1.15 7.9L5.1 5.35" stroke="#c9c9c9" stroke-width="1.7" fill="none"/></svg>
<div class="t " style="left:737px;top:528px;color:#c9c9c9"> 3s</div>
<svg class="g" style="left:962px;top:527px" width="9" height="26" viewBox="0 0 9 26"><rect x="1.9" y="5.4" width="5.4" height="13" rx="2.7" fill="none" stroke="#c9c9c9" stroke-width="1.4"/><path d="M6.9 9.3L2.3 14.6" stroke="#c9c9c9" stroke-width="1.1" fill="none"/></svg>
<div class="t " style="left:962px;top:528px;color:#c9c9c9"> s</div>
<div class="r" style="left:8px;top:553px;width:990px;height:26px;background:#73ab7f;"></div>
<div class="r" style="left:287px;top:553px;width:126px;height:26px;background:#43a9b9;"></div>
<div class="t " style="left:44px;top:554px;color:#1b1b1b">PID</div>
<div class="t " style="left:80px;top:554px;color:#1b1b1b">USER</div>
<div class="t " style="left:125px;top:554px;color:#1b1b1b">DEV</div>
<div class="t " style="left:197px;top:554px;color:#1b1b1b">TYPE</div>
<div class="t " style="left:251px;top:554px;color:#1b1b1b">GPU</div>
<div class="t " style="left:350px;top:554px;color:#1b1b1b">GPU MEM</div>
<div class="t " style="left:449px;top:554px;color:#1b1b1b">CPU</div>
<div class="t " style="left:494px;top:554px;color:#1b1b1b">HOST MEM</div>
<div class="t " style="left:575px;top:554px;color:#1b1b1b">Command</div>
<div class="r" style="left:8px;top:709px;width:990px;height:26px;background:#43a9b9;"></div>
<div class="r" style="left:8px;top:709px;width:18px;height:26px;background:#151515;"></div>
<div class="t " style="left:8px;top:710px;color:#d2d2d2">F2</div>
<div class="t " style="left:26px;top:710px;color:#1b1b1b">Setup</div>
<div class="r" style="left:98px;top:709px;width:18px;height:26px;background:#151515;"></div>
<div class="t " style="left:98px;top:710px;color:#d2d2d2">F6</div>
<div class="t " style="left:116px;top:710px;color:#1b1b1b">Sort</div>
<div class="r" style="left:188px;top:709px;width:18px;height:26px;background:#151515;"></div>
<div class="t " style="left:188px;top:710px;color:#d2d2d2">F9</div>
<div class="t " style="left:206px;top:710px;color:#1b1b1b">Kill</div>
<div class="r" style="left:278px;top:709px;width:27px;height:26px;background:#151515;"></div>
<svg class="g" style="left:287px;top:709px" width="9" height="26" viewBox="0 0 9 26"><path d="M5.35 4.7V19.1" stroke="#d2d2d2" stroke-width="1.55" fill="none"/><path d="M1.15 7.9L5.1 5.35" stroke="#d2d2d2" stroke-width="1.7" fill="none"/></svg>
<svg class="g" style="left:296px;top:709px" width="9" height="26" viewBox="0 0 9 26"><rect x="1.9" y="5.4" width="5.4" height="13" rx="2.7" fill="none" stroke="#d2d2d2" stroke-width="1.4"/><path d="M6.9 9.3L2.3 14.6" stroke="#d2d2d2" stroke-width="1.1" fill="none"/></svg>
<div class="t " style="left:278px;top:710px;color:#d2d2d2">F  </div>
<div class="t " style="left:305px;top:710px;color:#1b1b1b">Quit</div>
<div class="r" style="left:377px;top:709px;width:27px;height:26px;background:#151515;"></div>
<svg class="g" style="left:386px;top:709px" width="9" height="26" viewBox="0 0 9 26"><path d="M5.35 4.7V19.1" stroke="#d2d2d2" stroke-width="1.55" fill="none"/><path d="M1.15 7.9L5.1 5.35" stroke="#d2d2d2" stroke-width="1.7" fill="none"/></svg>
<div class="t " style="left:377px;top:710px;color:#d2d2d2">F 2</div>
<div class="t " style="left:404px;top:710px;color:#1b1b1b">Save Config</div>
<div class="r" style="left:8px;top:735px;width:990px;height:26px;background:#73ab7f;"></div>
<svg class="g" style="left:8px;top:735px" width="9" height="26" viewBox="0 0 9 26"><path d="M7.2 3.7H2.85V20.55H7.2" stroke="#1b1b1b" stroke-width="1.45" fill="none"/></svg>
<svg class="g" style="left:44px;top:735px" width="9" height="26" viewBox="0 0 9 26"><path d="M1.5 19.2H7.9" stroke="#1b1b1b" stroke-width="1.5" fill="none"/></svg>
<svg class="g" style="left:89px;top:735px" width="9" height="26" viewBox="0 0 9 26"><path d="M1.8 3.7H6.15V20.55H1.8" stroke="#1b1b1b" stroke-width="1.45" fill="none"/></svg>
<svg class="g" style="left:98px;top:735px" width="9" height="26" viewBox="0 0 9 26"><rect x="1.9" y="5.4" width="5.4" height="13" rx="2.7" fill="none" stroke="#1b1b1b" stroke-width="1.4"/><path d="M6.9 9.3L2.3 14.6" stroke="#1b1b1b" stroke-width="1.1" fill="none"/></svg>
<svg class="g" style="left:152px;top:735px" width="9" height="26" viewBox="0 0 9 26"><path d="M1.1 12.5H7.9" stroke="#1b1b1b" stroke-width="1.4" fill="none"/></svg>
<svg class="g" style="left:170px;top:735px" width="9" height="26" viewBox="0 0 9 26"><path d="M5.35 4.7V19.1" stroke="#1b1b1b" stroke-width="1.55" fill="none"/><path d="M1.15 7.9L5.1 5.35" stroke="#1b1b1b" stroke-width="1.7" fill="none"/></svg>
<div class="t " style="left:8px;top:736px;color:#1b1b1b"> ssh tmux  :bash   :nvtop*</div>
<svg class="g" style="left:737px;top:735px" width="9" height="26" viewBox="0 0 9 26"><path d="M5.35 4.7V19.1" stroke="#1b1b1b" stroke-width="1.55" fill="none"/><path d="M1.15 7.9L5.1 5.35" stroke="#1b1b1b" stroke-width="1.7" fill="none"/></svg>
<svg class="g" style="left:755px;top:735px" width="9" height="26" viewBox="0 0 9 26"><path d="M5.35 4.7V19.1" stroke="#1b1b1b" stroke-width="1.55" fill="none"/><path d="M1.15 7.9L5.1 5.35" stroke="#1b1b1b" stroke-width="1.7" fill="none"/></svg>
<svg class="g" style="left:935px;top:735px" width="9" height="26" viewBox="0 0 9 26"><path d="M1.1 12.5H7.9" stroke="#1b1b1b" stroke-width="1.4" fill="none"/></svg>
<svg class="g" style="left:971px;top:735px" width="9" height="26" viewBox="0 0 9 26"><path d="M1.1 12.5H7.9" stroke="#1b1b1b" stroke-width="1.4" fill="none"/></svg>
<div class="t " style="left:647px;top:736px;color:#1b1b1b">&quot;root@C.32 4 257: /wor&quot; 22:47 27 Feb 26</div>
</div></div>
</body></html>
